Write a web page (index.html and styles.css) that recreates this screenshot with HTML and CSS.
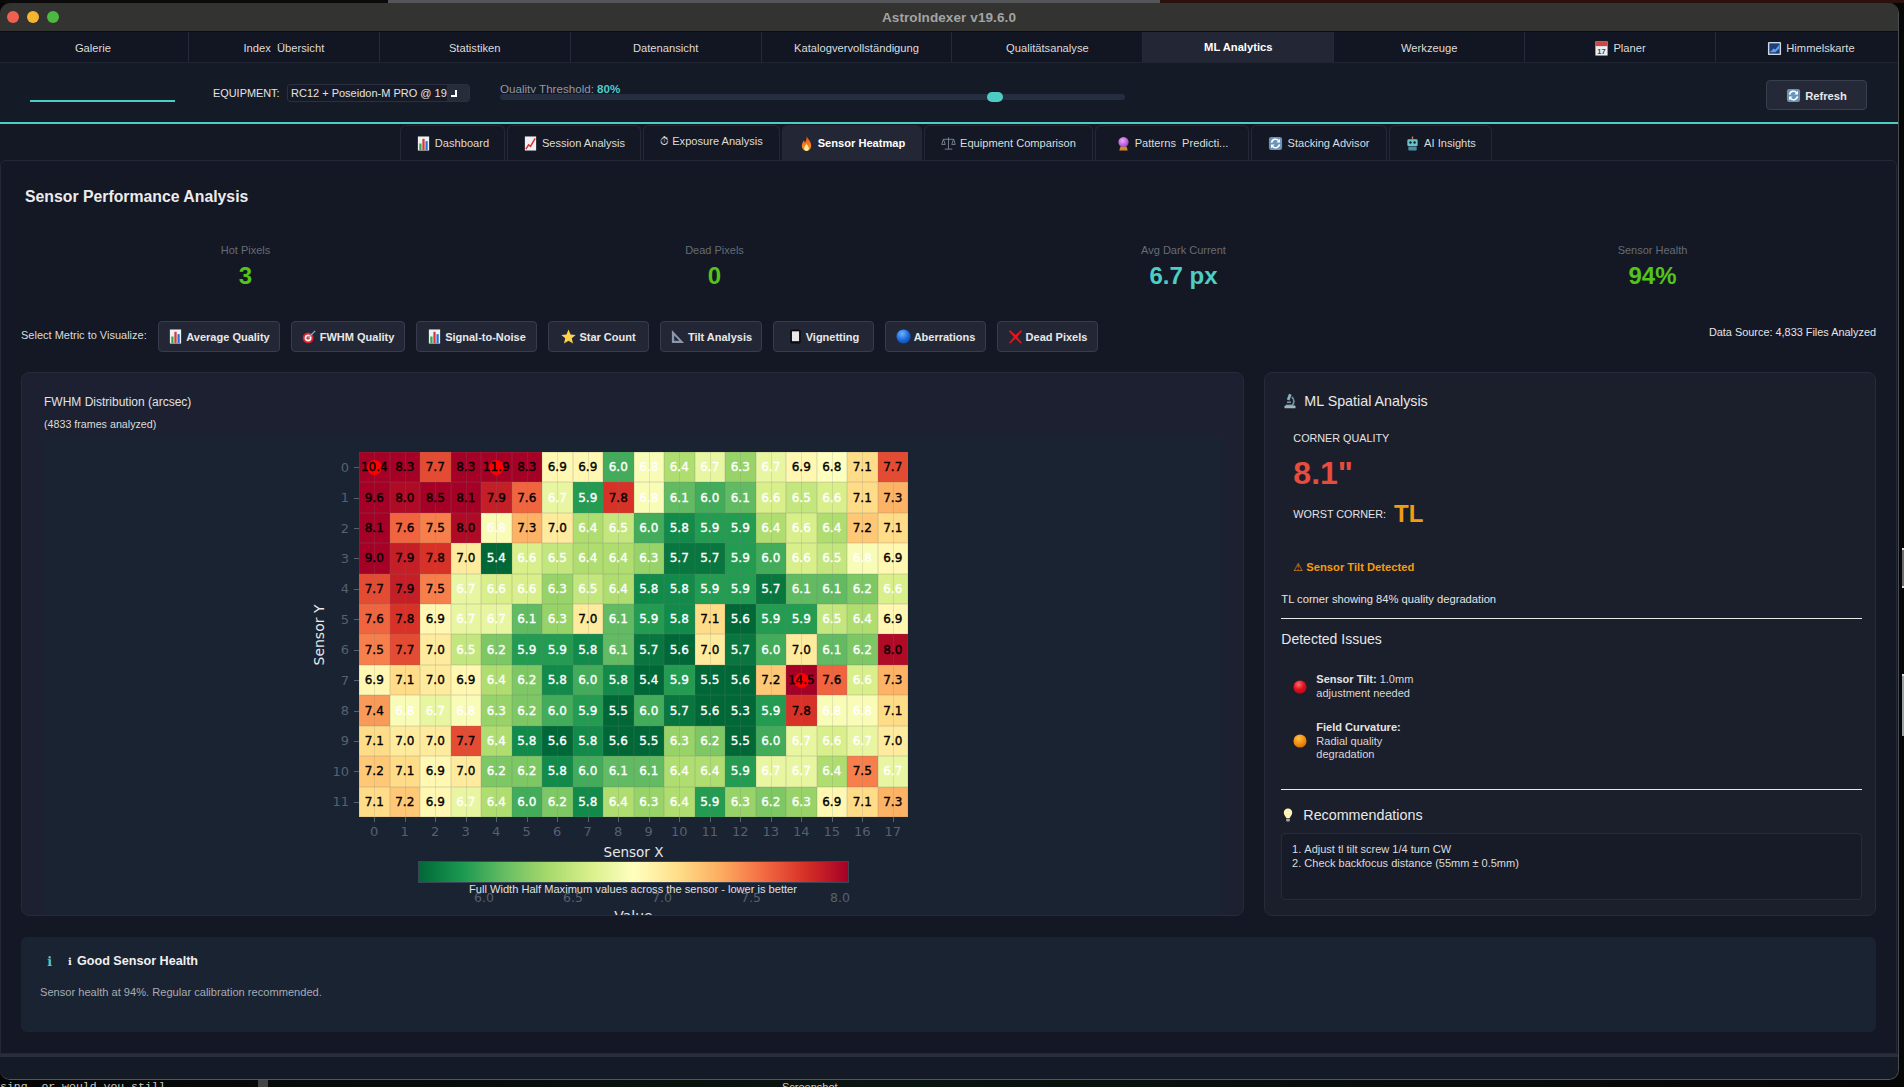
FILE: index.html
```html
<!DOCTYPE html>
<html lang="de">
<head>
<meta charset="utf-8">
<title>AstroIndexer v19.6.0</title>
<link rel="stylesheet" href="styles.css">
</head>
<body>
<svg class="sprite" aria-hidden="true">
  <defs>
    <radialGradient id="g-red" cx=".4" cy=".3" r=".8"><stop offset="0" stop-color="#ff6a6a"/><stop offset=".5" stop-color="#e01020"/><stop offset="1" stop-color="#a80c14"/></radialGradient>
    <radialGradient id="g-orange" cx=".4" cy=".3" r=".8"><stop offset="0" stop-color="#ffc04a"/><stop offset=".6" stop-color="#f08a0c"/><stop offset="1" stop-color="#c46a06"/></radialGradient>
    <radialGradient id="g-blue" cx=".4" cy=".3" r=".8"><stop offset="0" stop-color="#6ab4ff"/><stop offset=".6" stop-color="#1a66d8"/><stop offset="1" stop-color="#0f46a0"/></radialGradient>
    <radialGradient id="g-purple" cx=".4" cy=".35" r=".7"><stop offset="0" stop-color="#f0a8f8"/><stop offset="1" stop-color="#9a3cc8"/></radialGradient>
    <linearGradient id="g-fire" x1="0" y1="0" x2="0" y2="1"><stop offset="0" stop-color="#f0501c"/><stop offset="1" stop-color="#fb9a1e"/></linearGradient>
  </defs>
  <symbol id="i-chart" viewBox="0 0 16 16"><rect x="2" y="0.5" width="12" height="15" fill="#eef1f4"/><rect x="3.5" y="8" width="2.4" height="7" fill="#2eaa48"/><rect x="6.8" y="3" width="2.4" height="12" fill="#d83838"/><rect x="10.1" y="5.5" width="2.4" height="9.5" fill="#2a6fd8"/></symbol>
  <symbol id="i-trend" viewBox="0 0 16 16"><rect x="2" y="0.5" width="12" height="15" fill="#eef1f4"/><path d="M3 14 6 9.5 8 11 13 2.5" fill="none" stroke="#d83030" stroke-width="1.6"/></symbol>
  <symbol id="i-fire" viewBox="0 0 16 16"><path d="M8 0C9 3 13 5.5 13 10.2 13 13.5 10.700 16 8 16S3 13.500 3 10.200C3 7.800 4.500 6.500 5 4.500 6 5.500 6.300 6.500 6.300 7.300 7.500 5.500 8.400 3 8 0Z" fill="url(#g-fire)"/><path d="M8 8C8.300 10 10.500 11 10.500 13 10.500 14.800 9.300 16 8 16S5.500 14.800 5.500 13C5.500 11 7.500 10 8 8Z" fill="#fde9a0"/></symbol>
  <symbol id="i-scale" viewBox="0 0 16 16"><path d="M8 1.500V14M4 14H12M2.500 3.500H13.500M2.500 3.500 0.800 9H4.600ZM13.500 3.500 11.400 9H15.200Z" fill="none" stroke="#7b8494" stroke-width="1"/></symbol>
  <symbol id="i-ball" viewBox="0 0 16 16"><circle cx="8" cy="6.500" r="5.500" fill="url(#g-purple)"/><path d="M4.500 11.500H11.500L12.500 15.500H3.500Z" fill="#d08a28"/></symbol>
  <symbol id="i-refresh" viewBox="0 0 16 16"><rect x="1" y="1" width="14" height="14" rx="2.500" fill="#6d93b8"/><path d="M3.800 7A4.300 4.300 0 0 1 11.500 5.200M12.200 9A4.300 4.300 0 0 1 4.500 10.800" fill="none" stroke="#fff" stroke-width="1.700"/><path d="M12.800 3V7H9ZM3.200 13V9H7Z" fill="#fff"/></symbol>
  <symbol id="i-robot" viewBox="0 0 16 16"><path d="M8 0.500V3.500" stroke="#c9813a" stroke-width="1.400"/><rect x="2.500" y="3.500" width="11" height="7.500" rx="1.500" fill="#6fc4cc"/><circle cx="5.800" cy="7" r="1.300" fill="#123"/><circle cx="10.200" cy="7" r="1.300" fill="#123"/><rect x="3.500" y="11.500" width="9" height="4" rx="1" fill="#4a8fa0"/></symbol>
  <symbol id="i-target" viewBox="0 0 16 16"><circle cx="6.500" cy="9.500" r="5.800" fill="#e0202c"/><circle cx="6.500" cy="9.500" r="3.700" fill="#f4f4f4"/><circle cx="6.500" cy="9.500" r="1.800" fill="#e0202c"/><path d="M6.500 9.500 14 2" stroke="#6fb4d0" stroke-width="1.500"/></symbol>
  <symbol id="i-star" viewBox="0 0 16 16"><path d="M8 .6 10.200 5.800 15.600 6.300 11.500 9.900 12.800 15.400 8 12.500 3.200 15.400 4.500 9.900 .4 6.300 5.800 5.800Z" fill="#fbd24a"/></symbol>
  <symbol id="i-ruler" viewBox="0 0 16 16"><path d="M2 1V15H15ZM4.500 7V12.500H10Z" fill="#8b97ab" fill-rule="evenodd"/></symbol>
  <symbol id="i-vig" viewBox="0 0 16 16"><rect x="2.500" y="0.500" width="11" height="15" rx="2" fill="#0a0a0a"/><rect x="4.200" y="2.500" width="7.600" height="10.500" fill="#e8e8e8"/></symbol>
  <symbol id="i-blue" viewBox="0 0 16 16"><circle cx="8" cy="8" r="7.500" fill="url(#g-blue)"/></symbol>
  <symbol id="i-red" viewBox="0 0 16 16"><circle cx="8" cy="8" r="7.500" fill="url(#g-red)"/></symbol>
  <symbol id="i-orange" viewBox="0 0 16 16"><circle cx="8" cy="8" r="7.500" fill="url(#g-orange)"/></symbol>
  <symbol id="i-x" viewBox="0 0 16 16"><path d="M2 1 8 6.500 14 1 15 2.500 9.800 8.500 15 15 13.500 15.500 8 10 2.500 15.500 1 15 6.200 8.500 1 2.500Z" fill="#e8131c"/></symbol>
  <symbol id="i-micro" viewBox="0 0 16 16"><path d="M7 .8 9.600 1.800 7.400 7.600 4.800 6.600Z" fill="#8fb0bd"/><path d="M9.800 4A5.500 5.500 0 0 1 10 12.500H4" fill="none" stroke="#6e8d9a" stroke-width="1.800"/><rect x="5" y="8.500" width="4" height="1.500" fill="#7c97a3"/><rect x="2.500" y="12.500" width="11" height="2.800" rx=".6" fill="#9fb6bf"/></symbol>
  <symbol id="i-bulb" viewBox="0 0 16 16"><path d="M8 .5C11 .5 12.800 2.800 12.800 5.300 12.800 7.800 10.500 9.500 10 11.500H6C5.500 9.500 3.200 7.800 3.200 5.300 3.200 2.800 5 .5 8 .5Z" fill="#fff3b8"/><rect x="6" y="12" width="4" height="3.500" rx=".8" fill="#a8a89a"/></symbol>
  <symbol id="i-cal" viewBox="0 0 16 16"><rect x="1.500" y="0.500" width="13" height="15" fill="#eceff2"/><rect x="1.500" y="0.500" width="13" height="5" fill="#c8484a"/><text x="8" y="14" font-size="8" font-family="Liberation Sans" font-weight="700" text-anchor="middle" fill="#444">17</text></symbol>
  <symbol id="i-map" viewBox="0 0 16 16"><rect x="1" y="1" width="14" height="14" rx="1" fill="#cfd6de"/><rect x="2.500" y="2.500" width="11" height="11" fill="#1d3f7a"/><path d="M3 12 7 8 9 9 13 4 13 8 9 12Z" fill="#5f9fe8"/></symbol>
</svg>

<div class="desktop">
  <div class="strip-top"><i class="st-a"></i><i class="st-b"></i><i class="st-c"></i></div>
  <div class="desk-mid">
    <main class="window">
      <header class="titlebar">
        <div class="lights"><i class="l-red"></i><i class="l-yel"></i><i class="l-grn"></i></div>
        <div class="title">AstroIndexer v19.6.0</div>
      </header>

      <nav class="nav">
        <a class="nav-tab">Galerie</a>
        <a class="nav-tab">Index&nbsp; Übersicht</a>
        <a class="nav-tab">Statistiken</a>
        <a class="nav-tab">Datenansicht</a>
        <a class="nav-tab">Katalogvervollständigung</a>
        <a class="nav-tab">Qualitätsanalyse</a>
        <a class="nav-tab active">ML Analytics</a>
        <a class="nav-tab">Werkzeuge</a>
        <a class="nav-tab"><svg class="ico"><use href="#i-cal"/></svg>Planer</a>
        <a class="nav-tab"><svg class="ico"><use href="#i-map"/></svg>Himmelskarte</a>
      </nav>

      <section class="toolbar">
        <div class="search-line"></div>
        <label class="eq-label">EQUIPMENT:</label>
        <div class="select"><span class="select-val">RC12 + Poseidon-M PRO @ 1900mm</span><span class="select-arrow"><i></i></span></div>
        <div class="slider">
          <div class="slider-label">Quality Threshold: <b>80%</b></div>
          <div class="slider-track"><i class="slider-thumb"></i></div>
        </div>
        <button class="refresh"><svg class="ico"><use href="#i-refresh"/></svg>Refresh</button>
      </section>

      <nav class="subtabs">
        <a class="subtab s1"><svg class="ico"><use href="#i-chart"/></svg>Dashboard</a>
        <a class="subtab s2"><svg class="ico"><use href="#i-trend"/></svg>Session Analysis</a>
        <a class="subtab s3 raised">⏱ Exposure Analysis</a>
        <a class="subtab s4 active"><svg class="ico"><use href="#i-fire"/></svg>Sensor Heatmap</a>
        <a class="subtab s5"><svg class="ico"><use href="#i-scale"/></svg>Equipment Comparison</a>
        <a class="subtab s6"><svg class="ico"><use href="#i-ball"/></svg>Patterns&nbsp; Predicti...</a>
        <a class="subtab s7"><svg class="ico"><use href="#i-refresh"/></svg>Stacking Advisor</a>
        <a class="subtab s8"><svg class="ico"><use href="#i-robot"/></svg>AI Insights</a>
      </nav>

      <section class="content">
        <h1 class="page-title">Sensor Performance Analysis</h1>

        <div class="stats">
          <div class="stat"><div class="stat-label">Hot Pixels</div><div class="stat-value good">3</div></div>
          <div class="stat"><div class="stat-label">Dead Pixels</div><div class="stat-value good">0</div></div>
          <div class="stat"><div class="stat-label">Avg Dark Current</div><div class="stat-value teal">6.7 px</div></div>
          <div class="stat"><div class="stat-label">Sensor Health</div><div class="stat-value good">94%</div></div>
        </div>

        <div class="metrics">
          <span class="metrics-label">Select Metric to Visualize:</span>
          <button class="metric m1"><svg class="ico"><use href="#i-chart"/></svg>Average Quality</button>
          <button class="metric m2"><svg class="ico"><use href="#i-target"/></svg>FWHM Quality</button>
          <button class="metric m3"><svg class="ico"><use href="#i-chart"/></svg>Signal-to-Noise</button>
          <button class="metric m4"><svg class="ico"><use href="#i-star"/></svg>Star Count</button>
          <button class="metric m5"><svg class="ico"><use href="#i-ruler"/></svg>Tilt Analysis</button>
          <button class="metric m4"><svg class="ico"><use href="#i-vig"/></svg>Vignetting</button>
          <button class="metric m4"><svg class="ico"><use href="#i-blue"/></svg>Aberrations</button>
          <button class="metric m4"><svg class="ico"><use href="#i-x"/></svg>Dead Pixels</button>
          <span class="source">Data Source: 4,833 Files Analyzed</span>
        </div>

        <div class="panels">
          <article class="panel chart-panel">
            <div class="chart-title">FWHM Distribution (arcsec)</div>
            <div class="chart-sub">(4833 frames analyzed)</div>
            <div class="plot">
              <div class="heat-row">
                <div class="y-side">
                  <span class="y-title">Sensor Y</span>
                  <div class="y-ticks">
                    <span>0</span><span>1</span><span>2</span><span>3</span><span>4</span><span>5</span><span>6</span><span>7</span><span>8</span><span>9</span><span>10</span><span>11</span>
                  </div>
                </div>
                <div class="heatmap" id="heatmap"></div>
              </div>
              <div class="x-ticks">
                <span>0</span><span>1</span><span>2</span><span>3</span><span>4</span><span>5</span><span>6</span><span>7</span><span>8</span><span>9</span><span>10</span><span>11</span><span>12</span><span>13</span><span>14</span><span>15</span><span>16</span><span>17</span>
              </div>
              <div class="x-title">Sensor X</div>
              <div class="colorbar"></div>
              <div class="cb-area">
                <div class="cb-caption">Full Width Half Maximum values across the sensor - lower is better</div>
                <div class="cb-ticks"><span>6.0</span><span>6.5</span><span>7.0</span><span>7.5</span><span>8.0</span></div>
                <div class="cb-title">Value</div>
              </div>
            </div>
          </article>

          <aside class="panel side-panel">
            <h2 class="side-head"><svg class="ico big"><use href="#i-micro"/></svg>ML Spatial Analysis</h2>
            <div class="corner">
              <div class="corner-label">CORNER QUALITY</div>
              <div class="corner-value">8.1"</div>
              <div class="worst"><span>WORST CORNER:</span><b>TL</b></div>
              <div class="tilt-flag"><span class="warn">⚠</span> Sensor Tilt Detected</div>
            </div>
            <p class="tilt-note">TL corner showing 84% quality degradation</p>
            <hr class="rule">
            <h3 class="issues-head">Detected Issues</h3>
            <div class="issue first"><svg class="dot"><use href="#i-red"/></svg><div class="issue-text"><b>Sensor Tilt:</b> 1.0mm adjustment needed</div></div>
            <div class="issue second"><svg class="dot"><use href="#i-orange"/></svg><div class="issue-text"><b>Field Curvature:</b> Radial quality degradation</div></div>
            <hr class="rule rule2">
            <h2 class="side-head rec-head"><svg class="ico bulb"><use href="#i-bulb"/></svg>Recommendations</h2>
            <ol class="recs">
              <li>Adjust tl tilt screw 1/4 turn CW</li>
              <li>Check backfocus distance (55mm ± 0.5mm)</li>
            </ol>
          </aside>
        </div>

        <div class="alert">
          <div class="alert-head"><span class="alert-icon">ℹ</span><span class="alert-i2">ℹ</span>Good Sensor Health</div>
          <div class="alert-body">Sensor health at 94%. Regular calibration recommended.</div>
        </div>
      </section>
      <footer class="footer"></footer>
    </main>
    <div class="strip-right"><i class="sr-a"></i><i class="sr-b"></i></div>
  </div>
  <div class="strip-bottom"><span class="term">sing, or would you still</span><i class="term-thumb"></i><span class="shot">Screenshot</span></div>
</div>
<script src="heatmap.js"></script>
</body>
</html>
```

FILE: styles.css
```css
* { box-sizing: border-box; }
html, body { margin: 0; padding: 0; height: 100%; overflow: hidden; background: #000; }
body { font-family: "Liberation Sans", Arial, sans-serif; color: #e4e4e4; font-size: 12px; }
.sprite { position: absolute; width: 0; height: 0; }
.ico { width: 15px; height: 15px; flex: none; margin-right: 4px; }
.ico.big { width: 16px; height: 18px; margin-right: 6px; }
.ico.bulb { width: 14px; height: 18px; margin-right: 8px; margin-left: -1px; }

.desktop { width: 1904px; height: 1087px; display: flex; flex-direction: column; background: #050706; }
.strip-top { height: 3px; display: flex; flex: none; }
.strip-top i { display: block; height: 3px; }
.st-a { width: 388px; background: #0b0b0b; }
.st-b { width: 772px; background: #55565a; }
.st-c { flex: 1; background: #2b100c; }
.desk-mid { flex: 1; display: flex; min-height: 0; }
.strip-right { flex: 1; background: #060808; display: flex; flex-direction: column; align-items: flex-end; }
.sr-a { display: block; width: 2px; height: 40px; margin-top: 545px; background: #6b6b6b; border-top: 2px solid #ddd; border-bottom: 2px solid #ddd; }
.sr-b { display: block; width: 2px; height: 62px; margin-top: 86px; background: #9aa0a8; border-top: 2px solid #ddd; }
.strip-bottom { height: 7px; flex: none; display: flex; overflow: hidden; font-size: 11px; line-height: 14px; color: #c9c9c9; background: linear-gradient(90deg, #050505, #0a1410 45%, #050505); }
.term { font-family: "Liberation Mono", monospace; width: 258px; font-size: 11.5px; }
.term-thumb { width: 10px; height: 7px; background: #444; }
.shot { margin-left: 514px; font-size: 11px; }

.window { width: 1899px; display: flex; flex-direction: column; background: #141824; border-radius: 10px; overflow: hidden; border-right: 1px solid #4a4c52; border-bottom: 1px solid #55575c; }

.titlebar { height: 29px; flex: none; background: #333331; border-bottom: 1px solid #0c0c0c; position: relative; display: flex; align-items: center; justify-content: center; }
.lights { position: absolute; left: 7px; top: 8px; display: flex; gap: 8px; }
.lights i { display: block; width: 12px; height: 12px; border-radius: 50%; }
.l-red { background: #f0604f; }
.l-yel { background: #f6b52e; }
.l-grn { background: #4cb93f; }
.title { font-size: 13.5px; font-weight: 700; color: #a3a3a3; letter-spacing: .1px; }

.nav { height: 31px; flex: none; display: grid; grid-template-columns: repeat(10, 190.9px); margin-left: -2px; background: #121623; }
.nav-tab { display: flex; align-items: center; justify-content: center; font-size: 11.2px; color: #dcdcdc; padding-top: 2px; border-right: 1px solid #252a38; border-bottom: 1px solid #1f2431; }
.nav-tab.active { background: #232735; color: #fff; font-weight: 700; padding-top: 0; }

.toolbar { height: 59px; flex: none; background: #151a27; display: flex; position: relative; align-items: flex-start; padding-left: 30px; }
.search-line { width: 145px; height: 2px; margin-top: 37px; background: #4ecdc4; }
.eq-label { margin-left: 38px; width: 66px; margin-top: 23px; font-size: 10.9px; line-height: 14px; color: #e4e4e4; white-space: nowrap; }
.select { margin-left: 8px; margin-top: 21px; width: 183px; height: 18px; display: flex; background: #161a27; border: 1px solid #2a3040; border-radius: 3px; overflow: hidden; }
.select-val { flex: 1; overflow: hidden; white-space: nowrap; font-size: 11px; line-height: 16px; padding-left: 3px; }
.select-arrow { width: 22px; flex: none; background: #272c3b; position: relative; }
.select-arrow i { position: absolute; left: 4px; top: 5px; width: 6px; height: 7px; border-right: 2px solid #fff; border-bottom: 2px solid #fff; }
.slider { margin-left: 30px; width: 625px; position: relative; }
.slider-label { height: 9px; margin-top: 21px; overflow: hidden; font-size: 11.6px; line-height: 9px; color: #9298a4; white-space: pre; }
.slider-label b { color: #4ecdc4; font-weight: 700; }
.slider-track { height: 6px; margin-top: 1px; background: #252d40; border-radius: 3px; position: relative; }
.slider-thumb { position: absolute; left: 487px; top: -2px; width: 16px; height: 10px; border-radius: 5px; background: #4ecdc4; }
.refresh { position: absolute; left: 1766px; top: 17px; width: 101px; height: 30px; padding: 1px 0 0; background: #252836; border: 1px solid #3a3f50; border-radius: 4px; color: #e8e8e8; font: 700 11.2px "Liberation Sans", Arial, sans-serif; display: flex; align-items: center; justify-content: center; }

.subtabs { height: 38px; flex: none; border-top: 2px solid #4ecdc4; padding-top: 1px; background: #141824; display: flex; gap: 2px; padding-left: 400px; }
.subtab { display: flex; align-items: center; justify-content: center; font-size: 11.1px; color: #dcdcdc; border: 1px solid #232837; border-bottom: none; border-radius: 6px 6px 0 0; }
.subtab.raised { padding-bottom: 3px; }
.subtab.active { background: #232735; color: #fff; font-weight: 700; }
.s1 { width: 105px; } .s2 { width: 134px; } .s3 { width: 137px; } .s4 { width: 140px; }
.s5 { width: 169px; } .s6 { width: 154px; } .s7 { width: 136px; } .s8 { width: 103px; }

.content { flex: 1; min-height: 0; overflow: hidden; background: #141824; border: 1px solid #242937; border-radius: 6px 6px 0 0; padding: 25px 20px 0 20px; margin-right: 1px; }
.page-title { margin: 0; font-size: 15.8px; line-height: 21px; font-weight: 700; color: #ececec; padding-left: 4px; }

.stats { margin-top: 35px; display: grid; grid-template-columns: repeat(4, 469px); margin-left: -10px; }
.stat { text-align: center; }
.stat-label { font-size: 11px; line-height: 16px; color: #666b75; }
.stat-value { margin-top: 4px; font-size: 24px; line-height: 28px; font-weight: 700; }
.good { color: #52c41a; }
.teal { color: #4ecdc4; }

.metrics { margin-top: 31px; height: 31px; display: flex; gap: 11px; align-items: flex-start; position: relative; }
.metrics-label { width: 126px; font-size: 11px; line-height: 28px; white-space: nowrap; color: #dcdcdc; }
.metric { height: 31px; background: #232735; border: 1px solid #383d4d; border-radius: 4px; color: #e8e8e8; font: 700 11px "Liberation Sans", Arial, sans-serif; display: flex; align-items: center; justify-content: center; padding: 0; white-space: nowrap; }
.metric .ico { margin-right: 3px; }
.m1 { width: 122px; } .m2 { width: 114px; } .m3 { width: 121px; } .m4 { width: 101px; } .m5 { width: 102px; }
.source { margin-left: auto; margin-top: 3px; font-size: 10.9px; line-height: 16px; color: #e4e4e4; }

.panels { margin-top: 20px; display: grid; grid-template-columns: 2fr 1fr; gap: 20px; height: 544px; }
.panel { border: 1px solid #262b3a; border-radius: 8px; overflow: hidden; min-width: 0; }

.chart-panel { background: #1c2030; padding: 21px 22px 0; }
.chart-title { font-size: 12px; line-height: 16px; color: #e2e2e2; }
.chart-sub { margin-top: 7px; font-size: 10.7px; line-height: 14px; color: #dcdcdc; }
.plot { margin-top: 6px; height: 500px; background: #1a2332; padding-top: 15px; font-family: "DejaVu Sans", sans-serif; }
.heat-row { display: grid; grid-template-columns: 315px 549px; height: 365px; }
.y-side { position: relative; display: flex; justify-content: flex-end; padding-right: 10px; }
.y-ticks { width: 30px; display: grid; grid-template-rows: repeat(12, 1fr); font-size: 13px; color: #566070; text-align: right; }
.y-ticks span { display: flex; align-items: center; justify-content: flex-end; position: relative; }
.y-ticks span::after { content: ""; position: absolute; right: -10px; top: 50%; width: 5px; height: 1px; background: #566070; }
.y-title { position: absolute; left: 275px; top: 183px; transform: translate(-50%, -50%) rotate(-90deg); font-size: 14px; white-space: nowrap; color: #e8e8e8; }
.heatmap { display: grid; grid-template-columns: repeat(18, 1fr); grid-template-rows: repeat(12, 1fr); }
.cell { position: relative; display: flex; align-items: center; justify-content: center; font-size: 12px; -webkit-text-stroke: .35px currentColor; box-shadow: inset 0 0 0 .5px rgba(120, 120, 120, .28); }
.cell::before { content: ""; position: absolute; left: 50%; top: 0; bottom: 0; width: 1px; background: rgba(120, 120, 120, .18); }
.cell.dark { color: #000; }
.cell.light { color: #fff; }
.cell span { position: relative; }
.cell.hot::after { content: ""; position: absolute; left: 50%; top: 50%; width: 15px; height: 15px; margin: -7.5px 0 0 -7.5px; border-radius: 50%; background: #f00; }
.cell.hot span { z-index: 1; }
.x-ticks { margin-left: 315px; width: 549px; height: 25px; display: grid; grid-template-columns: repeat(18, 1fr); font-size: 13px; color: #566070; text-align: center; }
.x-ticks span { position: relative; padding-top: 7px; line-height: 16px; }
.x-ticks span::before { content: ""; position: absolute; left: 50%; top: 0; width: 1px; height: 5px; background: #566070; }
.x-title { margin-left: 315px; width: 549px; margin-top: 1px; text-align: center; font-size: 13.5px; line-height: 18px; color: #e8e8e8; }
.colorbar { margin-left: 374px; width: 431px; height: 22px; border: 1px solid #3a4558; background: linear-gradient(90deg, #006837, #1a9850 10%, #66bd63 20%, #a6d96a 30%, #d9ef8b 40%, #ffffbf 50%, #fee08b 60%, #fdae61 70%, #f46d43 80%, #d73027 90%, #a50026); }
.cb-area { position: relative; }
.cb-caption { position: absolute; left: 425px; top: 0; font: 11.1px/12px "Liberation Sans", Arial, sans-serif; color: #e0e0e0; white-space: nowrap; z-index: 1; }
.cb-ticks { margin-left: 440px; width: 356px; padding-top: 8px; display: flex; justify-content: space-between; font-size: 12.5px; color: #566070; }
.cb-ticks span { width: 0; display: flex; justify-content: center; line-height: 14px; }
.cb-title { margin-left: 315px; width: 549px; text-align: center; margin-top: 2px; font-size: 14px; line-height: 18px; color: #e8e8e8; }

.side-panel { background: #1b1e2b; padding: 18px 13px 0 16px; }
.side-head { margin: 0; display: flex; align-items: center; height: 20px; font-size: 14.3px; font-weight: 400; color: #e8e8e8; padding-left: 1px; }
.corner { padding-left: 12px; }
.corner-label { margin-top: 20px; font-size: 10.8px; line-height: 14px; color: #e4e4e4; }
.corner-value { margin-top: 9px; font-size: 32px; line-height: 38px; font-weight: 700; color: #e74c3c; }
.worst { margin-top: 8px; height: 28px; display: flex; align-items: center; gap: 8px; font-size: 10.8px; color: #e4e4e4; }
.worst b { font-size: 24px; color: #f39c12; }
.tilt-flag { margin-top: 32px; font-size: 11.2px; line-height: 14px; font-weight: 700; color: #f39c12; }
.warn { font-family: "DejaVu Sans", sans-serif; font-weight: 400; font-size: 11px; }
.tilt-note { margin: 17px 0 0; font-size: 11.2px; line-height: 14px; color: #e4e4e4; }
.rule { margin: 12px 0 0; border: 0; height: 1px; background: #eaeaea; }
.rule2 { margin-top: 27px; }
.issues-head { margin: 11px 0 0; font-size: 14px; line-height: 18px; font-weight: 400; color: #e8e8e8; }
.issue { display: flex; align-items: center; gap: 9px; padding-left: 12px; }
.issue.first { margin-top: 25px; }
.issue.second { margin-top: 21px; }
.dot { width: 14px; height: 16px; flex: none; }
.issue-text { width: 103px; font-size: 11px; line-height: 13.5px; color: #d8d8d8; }
.issue-text b { color: #e4e4e4; }
.rec-head { margin-top: 15px; }
.recs { margin: 8px 0 0; height: 67px; padding: 8px 10px 0 22px; background: #171b28; border: 1px solid #272c3b; border-radius: 4px; font-size: 11px; line-height: 14px; color: #dcdcdc; }

.alert { margin-top: 21px; height: 95px; background: #1a2332; border-radius: 6px; padding: 15px 19px 0; }
.alert-head { display: flex; align-items: center; height: 18px; font-size: 12.6px; font-weight: 700; color: #f0f0f0; }
.alert-icon { margin-left: 7px; width: 21px; font-family: "DejaVu Sans", sans-serif; color: #4ecdc4; font-size: 13px; font-weight: 400; }
.alert-i2 { width: 9px; font-family: "DejaVu Sans", sans-serif; font-size: 10px; }
.alert-body { margin-top: 14px; font-size: 11.1px; line-height: 16px; color: #a8abb2; }

.footer { height: 25px; flex: none; background: #151a27; border-top: 3px solid #2a2e3c; }
```

FILE: heatmap.js
```js
var DATA = [
  [10.4,8.3,7.7,8.3,11.9,8.3,6.9,6.9,6.0,6.8,6.4,6.7,6.3,6.7,6.9,6.84,7.1,7.7],
  [9.6,8.0,8.5,8.1,7.9,7.6,6.7,5.9,7.8,6.8,6.1,6.0,6.1,6.6,6.5,6.6,7.1,7.3],
  [8.1,7.6,7.5,8.0,6.8,7.3,7.0,6.4,6.5,6.0,5.8,5.9,5.9,6.4,6.6,6.4,7.2,7.1],
  [9.0,7.9,7.8,7.0,5.4,6.6,6.5,6.4,6.4,6.3,5.7,5.7,5.9,6.0,6.6,6.5,6.8,6.9],
  [7.7,7.9,7.5,6.7,6.6,6.6,6.3,6.5,6.4,5.8,5.8,5.9,5.9,5.7,6.1,6.1,6.2,6.6],
  [7.6,7.8,6.9,6.7,6.7,6.1,6.3,7.0,6.1,5.9,5.8,7.1,5.6,5.9,5.9,6.5,6.4,6.9],
  [7.5,7.7,7.0,6.5,6.2,5.9,5.9,5.8,6.1,5.7,5.6,7.0,5.7,6.0,7.0,6.1,6.2,8.0],
  [6.9,7.1,7.0,6.9,6.4,6.2,5.8,6.0,5.8,5.4,5.9,5.5,5.6,7.2,14.5,7.6,6.6,7.3],
  [7.4,6.8,6.7,6.8,6.3,6.2,6.0,5.9,5.5,6.0,5.7,5.6,5.3,5.9,7.8,6.8,6.8,7.1],
  [7.1,7.0,7.0,7.7,6.4,5.8,5.6,5.8,5.6,5.5,6.3,6.2,5.5,6.0,6.7,6.6,6.7,7.0],
  [7.2,7.1,6.9,7.0,6.2,6.2,5.8,6.0,6.1,6.1,6.4,6.4,5.9,6.7,6.7,6.4,7.5,6.7],
  [7.1,7.2,6.9,6.7,6.4,6.0,6.2,5.8,6.4,6.3,6.4,5.9,6.3,6.2,6.3,6.9,7.1,7.3]
];
var STOPS = [[0,104,55],[26,152,80],[102,189,99],[166,217,106],[217,239,139],[255,255,191],[254,224,139],[253,174,97],[244,109,67],[215,48,39],[165,0,38]];
var ZMIN = 5.63, ZMAX = 8.05;

function colourFor(v) {
  var t = Math.max(0, Math.min(1, (v - ZMIN) / (ZMAX - ZMIN))) * 10;
  var i = Math.min(9, Math.floor(t));
  var f = t - i;
  var a = STOPS[i], b = STOPS[i + 1];
  return 'rgb(' + [0, 1, 2].map(function (k) { return Math.round(a[k] + (b[k] - a[k]) * f); }).join(',') + ')';
}

var root = document.getElementById('heatmap');
DATA.forEach(function (row) {
  row.forEach(function (v) {
    var cell = document.createElement('div');
    cell.className = 'cell ' + (v >= 6.84 ? 'dark' : 'light') + (v >= 10 ? ' hot' : '');
    cell.style.background = colourFor(v);
    var label = document.createElement('span');
    label.textContent = v.toFixed(1);
    cell.appendChild(label);
    root.appendChild(cell);
  });
});
```
